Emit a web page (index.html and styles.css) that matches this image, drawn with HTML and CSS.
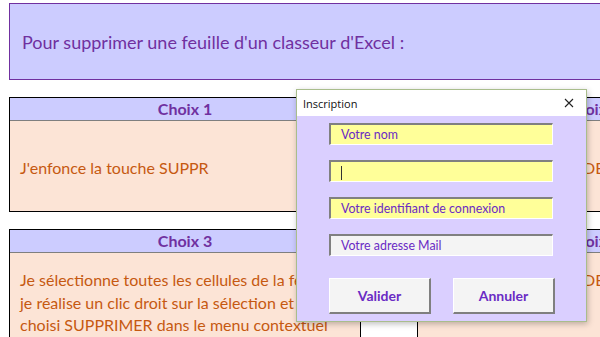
FILE: index.html
```html
<!DOCTYPE html>
<html lang="fr">
<head>
    <meta charset="UTF-8">
    <meta name="viewport" content="width=device-width, initial-scale=1.0">
    <title>Supprimer une feuille - Excel</title>
    <link rel="stylesheet" href="styles.css">
</head>
<body>
    <div class="page">
        <div class="banner">Pour supprimer une feuille d'un classeur d'Excel :</div>

        <div class="choix-grid">
            <div class="card">
                <div class="card-head">Choix 1</div>
                <div class="card-body center">J'enfonce la touche SUPPR</div>
            </div>
            <div class="spacer"></div>
            <div class="card">
                <div class="card-head">Choix 2</div>
                <div class="card-body center">J'appuie sur la touche DEL</div>
            </div>

            <div class="card">
                <div class="card-head">Choix 3</div>
                <div class="card-body top">Je sélectionne toutes les cellules de la feuille,<br>je réalise un clic droit sur la sélection et<br>choisi SUPPRIMER dans le menu contextuel</div>
            </div>
            <div class="spacer"></div>
            <div class="card">
                <div class="card-head">Choix 4</div>
                <div class="card-body top">J'appuie sur la touche DEL<br>puis je valide</div>
            </div>
        </div>
    </div>

    <!-- Formulaire par-dessus la feuille -->
    <div class="dialog">
        <div class="dialog-title">
            <span>Inscription</span>
            <svg class="close" width="10" height="10" viewBox="0 0 10 10">
                <path d="M1 1 L9 9 M9 1 L1 9" stroke="#222" stroke-width="1.1" fill="none"/>
            </svg>
        </div>
        <div class="dialog-body">
            <div class="field">Votre nom</div>
            <div class="field"><span class="caret"></span></div>
            <div class="field">Votre identifiant de connexion</div>
            <div class="field grey">Votre adresse Mail</div>
            <div class="buttons">
                <button type="button">Valider</button>
                <button type="button">Annuler</button>
            </div>
        </div>
    </div>
</body>
</html>
```

FILE: styles.css
```css
/* Feuille Excel */
body {
    margin: 0;
    width: 600px;
    height: 337px;
    overflow: hidden;
    background: #ffffff;
    font-family: Lato, 'Open Sans', sans-serif;
    position: relative;
}

.page {
    padding: 3px 0 0 9px;
}

.banner {
    width: 620px;
    height: 75px;
    border: 1px solid #7030a0;
    background: #ccccff;
    color: #7030a0;
    font-size: 18px;
    padding-left: 12px;
    display: flex;
    align-items: center;
}

.choix-grid {
    margin-top: 17px;
    display: grid;
    grid-template-columns: 352px 56px 352px;
    row-gap: 17px;
}

.card {
    border: 1px solid #000000;
    background: #fce4d6;
    overflow: hidden;
}

.card-head {
    height: 22px;
    background: #ccccff;
    border-bottom: 1px solid #7f7f7f;
    color: #7030a0;
    font-weight: bold;
    font-size: 16px;
    text-align: center;
    line-height: 22px;
}

.card-body {
    height: 90px;
    padding: 0 8px 0 10px;
    color: #c65911;
    font-size: 16px;
    white-space: nowrap;
}

.card-body.center {
    display: flex;
    align-items: center;
    padding-top: 3px;
    height: 87px;
}

.card-body.top {
    padding-top: 16px;
    height: 74px;
    line-height: 22.5px;
}

/* Boîte de dialogue */
.dialog {
    position: absolute;
    left: 296px;
    top: 89px;
    width: 289px;
    height: 231px;
    border: 1px solid #a9bd8c;
    box-shadow: 1px 2px 6px rgba(0, 0, 0, 0.25);
    background: #dacfff;
    font-family: 'Open Sans', sans-serif;
}

.dialog-title {
    height: 26px;
    background: #ffffff;
    display: flex;
    align-items: center;
    justify-content: space-between;
    padding: 0 12px 0 6px;
    font-size: 11px;
    color: #111111;
}

.dialog-body {
    padding: 7px 0 0 32px;
    display: flex;
    flex-direction: column;
    gap: 15px;
}

.field {
    width: 211px;
    height: 19px;
    background: #ffff99;
    border-style: solid;
    border-width: 2px 1px 1px 2px;
    border-color: #808080 #ffffff #ffffff #808080;
    color: #6a2bc4;
    font-family: Lato, sans-serif;
    font-size: 12.4px;
    line-height: 19px;
    padding-left: 10px;
}

.field.grey {
    background: #f4f4f4;
}

.caret {
    display: inline-block;
    width: 1px;
    height: 14px;
    background: #333333;
    vertical-align: middle;
}

.buttons {
    margin-top: 7px;
    display: flex;
    gap: 22px;
}

button {
    width: 102px;
    height: 36px;
    background: #f4f4f4;
    border-style: solid;
    border-width: 1px 2px 2px 1px;
    border-color: #ffffff #7f7f7f #7f7f7f #ffffff;
    color: #6a2bc4;
    font-family: Lato, sans-serif;
    font-weight: bold;
    font-size: 14px;
    cursor: pointer;
}
```
